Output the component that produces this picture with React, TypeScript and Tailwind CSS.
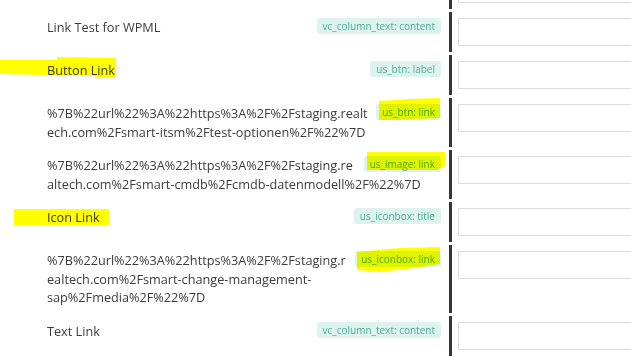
import React from "react";

type Row = {
  label: string;
  tag: string;
};

const rows: Row[] = [
  { label: "", tag: "" },
  { label: "Link Test for WPML", tag: "vc_column_text: content" },
  { label: "Button Link", tag: "us_btn: label" },
  {
    label: "%7B%22url%22%3A%22https%3A%2F%2Fstaging.realtech.com%2Fsmart-itsm%2Ftest-optionen%2F%22%7D",
    tag: "us_btn: link",
  },
  {
    label: "%7B%22url%22%3A%22https%3A%2F%2Fstaging.realtech.com%2Fsmart-cmdb%2Fcmdb-datenmodell%2F%22%7D",
    tag: "us_image: link",
  },
  { label: "Icon Link", tag: "us_iconbox: title" },
  {
    label: "%7B%22url%22%3A%22https%3A%2F%2Fstaging.realtech.com%2Fsmart-change-management-sap%2Fmedia%2F%22%7D",
    tag: "us_iconbox: link",
  },
  { label: "Text Link", tag: "vc_column_text: content" },
];

function StringRow({ label, tag }: Row) {
  return (
    <div className="flex">
      <div className="w-[449px] shrink-0 pl-[47px] pr-[8px] py-[6px]">
        {tag && (
          <span className="float-right ml-[5px] h-[16px] rounded-[3px] bg-[#dff3ee] px-[6px] text-[10px] leading-[16px] text-[#4aae99]">
            {tag}
          </span>
        )}
        <div className="break-words text-[12.7px] leading-[18.5px] text-[#3c3c3c]">{label}</div>
      </div>
      <div className="flex-1 border-l-[3px] border-[#363636] py-[6px] pl-[6px]">
        <div className="h-[28px] w-full border border-[#dcdcdc] bg-white" />
      </div>
    </div>
  );
}

export default function App() {
  return (
    <div
      className="relative h-[357px] w-[631px] overflow-hidden bg-white"
      style={{ fontFamily: '"Open Sans", "Noto Sans", sans-serif' }}
    >
      <div className="-mt-[31px] flex w-[900px] flex-col gap-[3px]">
        {rows.map((r, i) => (
          <StringRow key={i} {...r} />
        ))}
      </div>

      {/* marker highlights */}
      <svg
        className="pointer-events-none absolute left-0 top-0 mix-blend-multiply"
        width="631"
        height="357"
        viewBox="0 0 631 357"
      >
        <g fill="#ffff00">
          <path d="M0 60 L57 60 L57 57 L116 58 L116 77 L95 78 L95 76 L45 75 L0 74 Z" />
          <path d="M379 101 L410 99 L440 98 L440 118 L400 120 L379 120 Z" />
          <path d="M367 152 L445 152 L445 166 L437 170 L367 170 Z" />
          <rect x="14" y="209" width="95" height="16" />
          <path d="M357 252 L400 248 L440 247 L440 264 L415 268 L380 272 L357 270 Z" />
        </g>
      </svg>
    </div>
  );
}
